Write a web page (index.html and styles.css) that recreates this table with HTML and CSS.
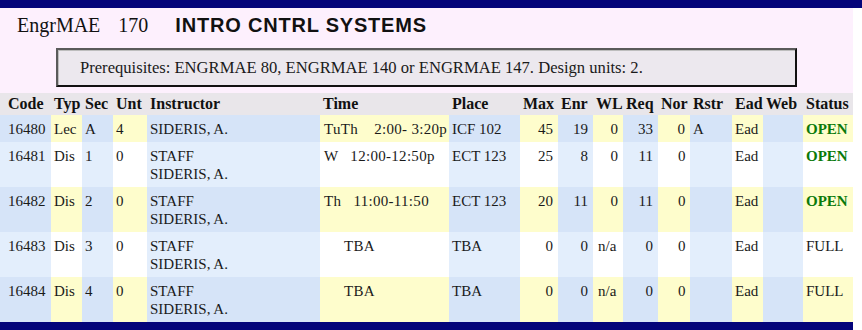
FILE: index.html
```html
<!DOCTYPE html>
<html>
<head>
<meta charset="utf-8">
<link rel="stylesheet" href="styles.css">
</head>
<body>
<div class="topbar"></div>
<div class="page">
  <div class="course">
    <div class="title">
      <span class="dept">EngrMAE</span>
      <span class="num">170</span>
      <span class="name">INTRO CNTRL SYSTEMS</span>
    </div>
    <div class="prereq">Prerequisites: ENGRMAE 80, ENGRMAE 140 or ENGRMAE 147. Design units: 2.</div>
  </div>
  <table class="sections">
    <colgroup>
      <col class="c-code"><col class="c-typ"><col class="c-sec"><col class="c-unt"><col class="c-ins"><col class="c-time"><col class="c-place"><col class="c-max"><col class="c-enr"><col class="c-wl"><col class="c-req"><col class="c-nor"><col class="c-rstr"><col class="c-ead"><col class="c-web"><col class="c-status">
    </colgroup>
    <thead>
      <tr>
        <th class="first">Code</th><th>Typ</th><th>Sec</th><th>Unt</th><th>Instructor</th><th>Time</th><th>Place</th><th>Max</th><th>Enr</th><th>WL</th><th>Req</th><th>Nor</th><th>Rstr</th><th>Ead</th><th>Web</th><th>Status</th>
      </tr>
    </thead>
    <tbody>
      <tr class="odd">
        <td class="first">16480</td><td>Lec</td><td>A</td><td>4</td><td>SIDERIS, A.</td><td class="time">TuTh    2:00- 3:20p</td><td>ICF 102</td><td class="n">45</td><td class="n">19</td><td class="n">0</td><td class="n">33</td><td class="n">0</td><td>A</td><td>Ead</td><td></td><td class="open">OPEN</td>
      </tr>
      <tr class="even">
        <td class="first">16481</td><td>Dis</td><td>1</td><td>0</td><td>STAFF<br>SIDERIS, A.</td><td class="time">W   12:00-12:50p</td><td>ECT 123</td><td class="n">25</td><td class="n">8</td><td class="n">0</td><td class="n">11</td><td class="c">0</td><td></td><td>Ead</td><td></td><td class="open">OPEN</td>
      </tr>
      <tr class="odd">
        <td class="first">16482</td><td>Dis</td><td>2</td><td>0</td><td>STAFF<br>SIDERIS, A.</td><td class="time">Th   11:00-11:50</td><td>ECT 123</td><td class="n">20</td><td class="n">11</td><td class="n">0</td><td class="n">11</td><td class="c">0</td><td></td><td>Ead</td><td></td><td class="open">OPEN</td>
      </tr>
      <tr class="even">
        <td class="first">16483</td><td>Dis</td><td>3</td><td>0</td><td>STAFF<br>SIDERIS, A.</td><td class="time">     TBA</td><td>TBA</td><td class="n">0</td><td class="n">0</td><td class="na">n/a</td><td class="n">0</td><td class="c">0</td><td></td><td>Ead</td><td></td><td>FULL</td>
      </tr>
      <tr class="odd">
        <td class="first">16484</td><td>Dis</td><td>4</td><td>0</td><td>STAFF<br>SIDERIS, A.</td><td class="time">     TBA</td><td>TBA</td><td class="n">0</td><td class="n">0</td><td class="na">n/a</td><td class="n">0</td><td class="c">0</td><td></td><td>Ead</td><td></td><td>FULL</td>
      </tr>
    </tbody>
  </table>
  <div class="bottombar"></div>
</div>
</body>
</html>
```

FILE: styles.css
```css
html, body {
  margin: 0;
  padding: 0;
  background: #ffffff;
}
body {
  width: 862px;
  height: 330px;
  overflow: hidden;
  font-family: "Liberation Serif", "Times New Roman", serif;
  color: #1a1a1a;
}
.topbar {
  height: 8px;
  background: #04047a;
}
.page {
  width: 853px;
}
.course {
  background: #fdf0fd;
  height: 85px;
  box-sizing: border-box;
  overflow: hidden;
}
.title {
  display: flex;
  align-items: baseline;
  height: 40px;
  padding-left: 17px;
  box-sizing: border-box;
  padding-top: 6px;
}
.dept, .num {
  font-family: "Liberation Serif", serif;
  font-size: 20px;
  color: #111;
}
.num {
  margin-left: 18px;
}
.name {
  margin-left: 27px;
  font-family: "Liberation Sans", Arial, sans-serif;
  font-weight: bold;
  font-size: 20px;
  letter-spacing: 0.8px;
  color: #111;
}
.prereq {
  margin-left: 56px;
  width: 741px;
  height: 39px;
  box-sizing: border-box;
  background: #ece8ee;
  border-style: solid;
  border-width: 2px;
  border-color: #5a5a5a #111 #111 #5a5a5a;
  box-shadow: inset 1px 1px 0 #bdbdbd;
  padding: 8px 0 0 22px;
  font-size: 16.6px;
  color: #1a1a1a;
}
.sections {
  border-collapse: collapse;
  table-layout: fixed;
  width: 853px;
  font-size: 15px;
}
.c-code { width: 51px; }
.c-typ { width: 31px; }
.c-sec { width: 31px; }
.c-unt { width: 34px; }
.c-ins { width: 173px; }
.c-time { width: 129px; }
.c-place { width: 71px; }
.c-max { width: 38px; }
.c-enr { width: 35px; }
.c-wl { width: 30px; }
.c-req { width: 35px; }
.c-nor { width: 32px; }
.c-rstr { width: 42px; }
.c-ead { width: 31px; }
.c-web { width: 40px; }
.c-status { width: 50px; }
th {
  background: #e9e6ea;
  font-weight: bold;
  font-size: 16px;
  text-align: left;
  height: 22px;
  padding: 0 0 0 3px;
  line-height: 18px;
  white-space: nowrap;
  overflow: hidden;
  color: #111;
  box-sizing: border-box;
}
td {
  padding: 5px 4px 4px 3px;
  line-height: 18px;
  vertical-align: top;
  white-space: nowrap;
  overflow: hidden;
}
th.first, td.first {
  padding-left: 8px;
}
td.n {
  text-align: right;
  padding-right: 5px;
}
td.c {
  text-align: left;
  padding-left: 20px;
}
td.na {
  padding-left: 5px;
}
td.time {
  white-space: pre;
  padding-left: 4px;
  letter-spacing: 0.3px;
}
td.open {
  color: #0a7a0a;
  font-weight: bold;
}
tr.odd td:nth-child(odd) { background: #d6e4f8; }
tr.odd td:nth-child(even) { background: #fefdcc; }
tr.even td:nth-child(odd) { background: #e3eefc; }
tr.even td:nth-child(even) { background: #ffffff; }
tr.odd td, tr.even td { height: 18px; }
.bottombar {
  height: 8px;
  background: #04047a;
}
```
